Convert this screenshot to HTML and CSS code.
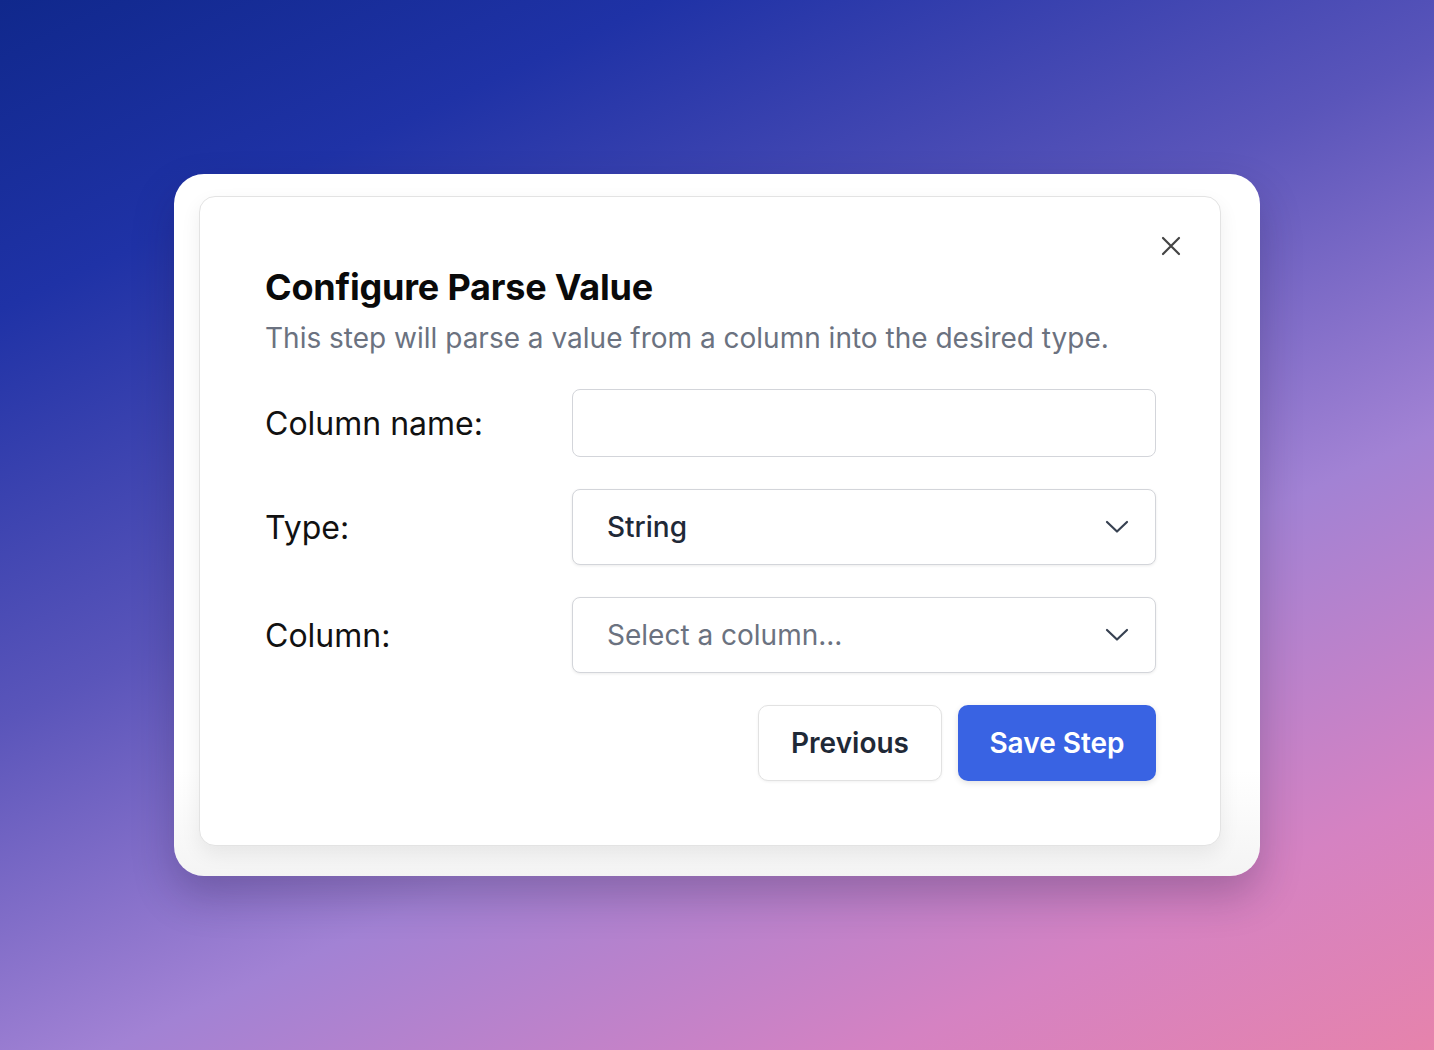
FILE: index.html
```html
<!DOCTYPE html>
<html lang="en">
<head>
<meta charset="utf-8">
<title>Configure Parse Value</title>
<link rel="stylesheet" href="styles.css">
</head>
<body>
<div class="frame">
  <div class="card">
    <button class="close" aria-label="Close">
      <svg width="20" height="20" viewBox="0 0 20 20" fill="none" stroke="#444" stroke-width="2.2" stroke-linecap="round"><path d="M2 2L18 18M18 2L2 18"/></svg>
    </button>
    <h1 class="title">Configure Parse Value</h1>
    <p class="subtitle">This step will parse a value from a column into the desired type.</p>
    <div class="form">
      <label class="label">Column name:</label>
      <div class="input"></div>
      <label class="label">Type:</label>
      <div class="select">
        <span class="value">String</span>
        <svg class="chev" width="26" height="14" viewBox="0 0 26 14" fill="none" stroke="#374151" stroke-width="2.2" stroke-linecap="round" stroke-linejoin="round"><path d="M3 2L13 11.5L23 2"/></svg>
      </div>
      <label class="label">Column:</label>
      <div class="select">
        <span class="placeholder">Select a column...</span>
        <svg class="chev" width="26" height="14" viewBox="0 0 26 14" fill="none" stroke="#374151" stroke-width="2.2" stroke-linecap="round" stroke-linejoin="round"><path d="M3 2L13 11.5L23 2"/></svg>
      </div>
    </div>
    <div class="actions">
      <button class="btn btn-secondary">Previous</button>
      <button class="btn btn-primary">Save Step</button>
    </div>
  </div>
</div>
</body>
</html>
```

FILE: styles.css
```css
* { box-sizing: border-box; }
html, body { margin: 0; height: 100%; }
body {
  font-family: Inter, "Noto Sans", sans-serif;
  display: flex;
  align-items: center;
  justify-content: center;
  background: linear-gradient(155deg, #10288c 0%, #1f32a6 18%, #5a55ba 42%, #a282d4 64%, #d582c2 85%, #e683ac 100%);
}
.frame {
  background: linear-gradient(to bottom, #ffffff 85%, #f4f4f4 100%);
  border-radius: 30px;
  padding: 22px 39px 30px 25px;
  box-shadow: 0 20px 40px rgba(30, 20, 60, 0.25);
}
.card {
  position: relative;
  width: 1022px;
  background: #fff;
  border: 1px solid #e3e3e3;
  border-radius: 16px;
  padding: 68px 64px 64px 65px;
  box-shadow: 0 8px 20px rgba(0, 0, 0, 0.07);
}
.close {
  position: absolute;
  top: 38px;
  right: 38px;
  width: 22px;
  height: 22px;
  padding: 1px;
  border: 0;
  background: transparent;
  display: flex;
  align-items: center;
  justify-content: center;
}
.title {
  margin: 0;
  font-size: 36px;
  line-height: 44px;
  font-weight: 700;
  color: #0a0a0a;
  letter-spacing: -0.2px;
}
.subtitle {
  margin: 9px 0 0;
  font-size: 28px;
  line-height: 40px;
  color: #6b7280;
}
.form {
  margin-top: 31px;
  display: grid;
  grid-template-columns: 307px 1fr;
  row-gap: 32px;
  align-items: center;
}
.label {
  font-size: 32px;
  color: #111;
}
.input {
  height: 68px;
  border: 1.5px solid #d3d5da;
  border-radius: 8px;
  background: #fff;
}
.select {
  height: 76px;
  border: 1.5px solid #d3d5da;
  border-radius: 8px;
  background: #fff;
  box-shadow: 0 1px 3px rgba(0, 0, 0, 0.08);
  display: flex;
  align-items: center;
  justify-content: space-between;
  padding: 0 25px 0 34px;
  font-size: 28px;
}
.value { color: #1f2937; font-weight: 500; }
.placeholder { color: #6b7280; }
.actions {
  margin-top: 32px;
  display: flex;
  justify-content: flex-end;
  gap: 16px;
}
.btn {
  height: 76px;
  padding: 0;
  border-radius: 10px;
  font-family: Inter, "Noto Sans", sans-serif;
  font-size: 28px;
  font-weight: 600;
  white-space: nowrap;
}
.btn-secondary {
  background: #fff;
  color: #1f2937;
  border: 1.5px solid #e2e2e2;
  box-shadow: 0 1px 3px rgba(0, 0, 0, 0.06);
  width: 184px;
}
.btn-primary {
  background: #3963e3;
  color: #fff;
  border: 0;
  box-shadow: 0 2px 6px rgba(0, 0, 0, 0.12);
  width: 198px;
}
```
